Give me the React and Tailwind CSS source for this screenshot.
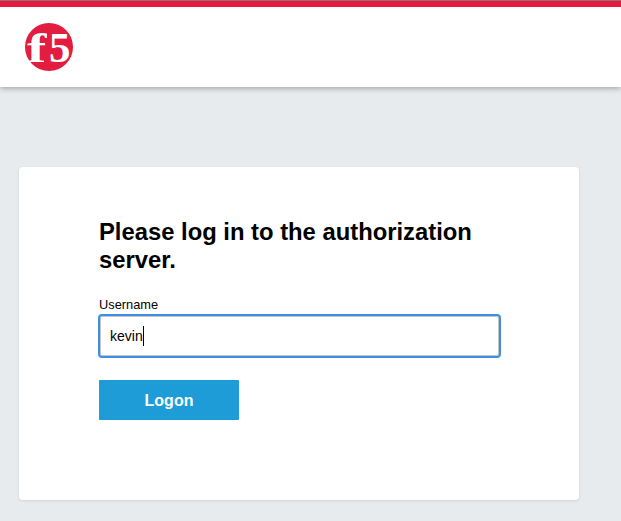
import React from "react";

function F5Logo() {
  return (
    <svg width="48" height="48" viewBox="0 0 48 48" className="block">
      <circle cx="24" cy="24" r="24" fill="#e21d3f" />
      <g fontFamily="Liberation Serif" fontWeight="700" fontSize="43" fill="#ffffff">
        <text transform="translate(2 39) scale(1.35 1)">f</text>
        <text x="24" y="39">5</text>
      </g>
    </svg>
  );
}

export default function App() {
  return (
    <div className="h-[521px] overflow-hidden bg-[#e7ebee] font-['Liberation_Sans',Arial,sans-serif] text-black">
      <header className="h-[87px] bg-white shadow-[0_1px_6px_rgba(0,0,0,0.35)]">
        <div className="h-px bg-[#7a7a7a]" />
        <div className="h-[6px] bg-[#e9173d]" />
        <div className="pl-[25px] pt-[16px]">
          <F5Logo />
        </div>
      </header>

      <main className="pl-[19px] pt-[80px]">
        <div className="h-[333px] w-[560px] rounded-[4px] bg-white pl-[80px] pt-[51px] shadow-[0_1px_3px_rgba(0,0,0,0.1)]">
          <h1 className="w-[400px] text-[23.8px] font-bold leading-[28px]">
            Please log in to the authorization server.
          </h1>
          <label className="mt-[23px] block text-[12.8px] leading-[15px]">Username</label>
          <div className="ml-[-1px] mt-[2px] flex h-[44px] w-[403px] items-center rounded-[4px] border-[2px] border-[#3e8ee6] pl-[10px] text-[14px] shadow-[inset_0_0_0_1px_#c4c4c4]">
            <span>kevin</span>
            <span className="h-[20px] w-px bg-black" />
          </div>
          <button className="mt-[22px] block h-[40px] w-[140px] rounded-[1px] bg-[#1e9cd7] pt-[1px] text-[16px] font-bold text-white">
            Logon
          </button>
        </div>
      </main>
    </div>
  );
}
